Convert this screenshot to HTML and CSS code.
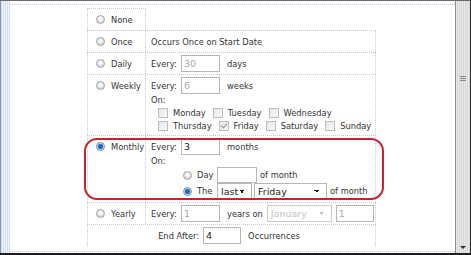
FILE: index.html
```html
<!DOCTYPE html>
<html lang="en">
<head>
    <meta charset="UTF-8">
    <title>Recurrence</title>
    <link rel="stylesheet" href="styles.css">
</head>
<body>
    <div class="window">
        <div class="edge"></div>

        <div class="page">
            <div class="recur">
                <div class="row row-none">
                    <div class="kind"><div class="line"><input type="radio" name="kind"> None</div></div>
                    <div class="detail"></div>
                </div>

                <div class="row">
                    <div class="kind"><div class="line"><input type="radio" name="kind"> Once</div></div>
                    <div class="detail"><div class="line">Occurs Once on Start Date</div></div>
                </div>

                <div class="row">
                    <div class="kind"><div class="line"><input type="radio" name="kind"> Daily</div></div>
                    <div class="detail">
                        <div class="line">
                            <span class="every">Every:</span>
                            <input type="text" class="num" value="30" disabled>
                            <span class="unit">days</span>
                        </div>
                    </div>
                </div>

                <div class="row row-weekly">
                    <div class="kind"><div class="line"><input type="radio" name="kind"> Weekly</div></div>
                    <div class="detail">
                        <div class="line">
                            <span class="every">Every:</span>
                            <input type="text" class="num" value="6" disabled>
                            <span class="unit">weeks</span>
                        </div>
                        <div class="line line-on">On:</div>
                        <div class="days">
                            <label><input type="checkbox"> Monday</label>
                            <label><input type="checkbox"> Tuesday</label>
                            <label><input type="checkbox"> Wednesday</label>
                        </div>
                        <div class="days">
                            <label><input type="checkbox"> Thursday</label>
                            <label><input type="checkbox" checked> Friday</label>
                            <label><input type="checkbox"> Saturday</label>
                            <label><input type="checkbox"> Sunday</label>
                        </div>
                    </div>
                </div>

                <div class="row row-monthly">
                    <div class="kind"><div class="line"><input type="radio" name="kind" checked> Monthly</div></div>
                    <div class="detail">
                        <div class="line">
                            <span class="every">Every:</span>
                            <input type="text" class="num" value="3">
                            <span class="unit">months</span>
                        </div>
                        <div class="line line-on">On:</div>
                        <div class="line line-pick">
                            <input type="radio" name="monthly">
                            <span class="opt">Day</span>
                            <input type="text" class="num day-num" value="">
                            <span class="tail">of month</span>
                        </div>
                        <div class="line line-pick">
                            <input type="radio" name="monthly" checked>
                            <span class="opt">The</span>
                            <select class="pick pick-nth"><option>last</option></select>
                            <select class="pick pick-wd"><option>Friday</option></select>
                            <span class="tail">of month</span>
                        </div>
                    </div>
                    <div class="callout"></div>
                </div>

                <div class="row row-yearly">
                    <div class="kind"><div class="line"><input type="radio" name="kind"> Yearly</div></div>
                    <div class="detail">
                        <div class="line">
                            <span class="every">Every:</span>
                            <input type="text" class="num" value="1" disabled>
                            <span class="unit">years on</span>
                            <select class="pick pick-month" disabled><option>January</option></select>
                            <input type="text" class="num day-of" value="1" disabled>
                        </div>
                    </div>
                </div>

                <div class="row row-end">
                    <div class="line">
                        End After:
                        <input type="text" class="num end-num" value="4">
                        <span class="unit">Occurrences</span>
                    </div>
                </div>
            </div>
        </div>

        <div class="scrollbar">
            <div class="thumb"><span class="grip"></span></div>
            <span class="down"></span>
        </div>
    </div>
</body>
</html>
```

FILE: styles.css
```css
* {
    box-sizing: border-box;
}
body {
    margin: 0;
    background: #fff;
    font-family: "DejaVu Sans", Verdana, sans-serif;
    font-size: 8.3px;
    color: #333;
}
.window {
    display: flex;
    width: 471px;
    height: 255px;
    border-top: 1px solid #6a6a6a;
    border-bottom: 2px solid #1e1e1e;
    border-right: 1px solid #2a2a2a;
}
.edge {
    width: 10px;
    border-left: 1px solid #8a94a8;
    background: repeating-linear-gradient(90deg, #d3def4 0 1px, #f1f4fc 1px 2px);
}
.page {
    flex: 1;
    margin: 3px 0 1px;
    padding: 3px 0 0 77px;
    border-top: 1px dotted #b9c6e4;
    border-bottom: 1px dotted #b9c6e4;
}
.recur {
    width: 289px;
}
.row {
    position: relative;
    display: grid;
    grid-template-columns: 58px 1fr;
    border-top: 1px dotted #c9c9d6;
    border-left: 1px dotted #c9c9d6;
    border-right: 1px dotted #c9c9d6;
}
.row-none {
    border-top: none;
    border-right: none;
}
.row-none .kind {
    border-top: 1px dotted #c9c9d6;
}
.kind {
    padding: 2px 0 2px 8px;
    border-right: 1px dotted #c9c9d6;
}
.kind .line {
    gap: 6px;
}
.detail {
    padding: 2px 0 2px 5px;
}
.row-weekly .detail {
    padding-bottom: 3px;
}
.row-monthly .detail {
    padding-bottom: 3px;
}
.line {
    display: flex;
    align-items: center;
    height: 17px;
    white-space: nowrap;
}
.line-on {
    height: 12px;
}
.line-pick {
    height: 16px;
    padding-left: 32px;
}
.every {
    width: 30px;
}
.unit {
    margin-left: 7px;
}
.num {
    width: 39px;
    height: 17px;
    margin: 0;
    padding: 0 2px;
    border: 1px solid #b7b7b7;
    font-family: "DejaVu Sans", Verdana, sans-serif;
    font-size: 9.5px;
    color: #222;
    background: #fff;
}
.num:disabled {
    color: #a8a8a8;
    background: #fff;
}
.day-num {
    width: 40px;
    height: 16px;
}
.opt {
    width: 20px;
    margin-left: 5px;
}
.tail {
    margin-left: 3px;
}
.pick {
    appearance: none;
    height: 16px;
    margin: 0;
    padding: 0 0 0 3px;
    border: 1px solid #b7b7b7;
    border-radius: 0;
    font-family: "DejaVu Sans", Verdana, sans-serif;
    font-size: 9.5px;
    color: #222;
    background-color: #fff;
    background-image: linear-gradient(45deg, transparent 50%, #1e1e1e 50%), linear-gradient(135deg, #1e1e1e 50%, transparent 50%);
    background-size: 3px 3px, 3px 3px;
    background-position: calc(100% - 9px) 6px, calc(100% - 6px) 6px;
    background-repeat: no-repeat;
}
.pick-nth {
    width: 35px;
}
.pick-wd {
    width: 73px;
    margin-left: 2px;
}
.pick-month {
    width: 65px;
    height: 17px;
    margin-left: 4px;
    color: #a8a8a8;
    background-image: linear-gradient(45deg, transparent 50%, #b0b0b0 50%), linear-gradient(135deg, #b0b0b0 50%, transparent 50%);
}
.day-of {
    width: 38px;
    margin-left: 4px;
}
.row-end {
    display: block;
    padding: 2px 5px 2px 0;
    border-right: 1px dotted #c9c9d6;
}
.row-end .line {
    justify-content: center;
}
.end-num {
    width: 38px;
    margin-left: 4px;
}

input[type="radio"] {
    appearance: none;
    width: 9px;
    height: 9px;
    margin: 0;
    border: 1px solid #a3a3a3;
    border-radius: 50%;
    background: radial-gradient(circle at 50% 40%, #f6f6f6 0 1.5px, #d2d2d2 4px);
    flex: none;
}
input[type="radio"]:checked {
    border-color: #7e8a98;
    background: radial-gradient(circle, #1670b8 0 2px, #5c9bd0 2.6px, #dde6ee 3.2px);
}
.days {
    display: flex;
    align-items: center;
    height: 13px;
    padding-left: 7px;
}
.days label {
    display: flex;
    align-items: center;
    gap: 5px;
    margin-right: 7px;
}
input[type="checkbox"] {
    appearance: none;
    position: relative;
    width: 10px;
    height: 10px;
    margin: 0;
    border: 1px solid #bdbdbd;
    background: linear-gradient(135deg, #e6e6e6, #fafafa);
}
input[type="checkbox"]:checked::after {
    content: "";
    position: absolute;
    left: 2px;
    top: 0;
    width: 3px;
    height: 5px;
    border-right: 1px solid #8a8a8a;
    border-bottom: 1px solid #8a8a8a;
    transform: rotate(40deg);
}

/* red annotation round the monthly row */
.callout {
    position: absolute;
    left: -4px;
    top: 2px;
    width: 300px;
    height: 62px;
    border: 2px solid #c6232e;
    border-radius: 13px;
    pointer-events: none;
}

.scrollbar {
    display: flex;
    flex-direction: column;
    align-items: center;
    width: 15px;
    border-left: 1px solid #8d8d8d;
    background: repeating-linear-gradient(90deg, #e9e9e9 0 1px, #d6d6d6 1px 2px);
}
.thumb {
    display: flex;
    align-items: center;
    justify-content: center;
    width: 12px;
    height: 150px;
    margin-top: 2px;
}
.grip {
    width: 6px;
    height: 5px;
    border-top: 1px solid #8a8a8a;
    border-bottom: 1px solid #8a8a8a;
    background: linear-gradient(#8a8a8a, #8a8a8a) center / 100% 1px no-repeat;
}
.down {
    margin-top: auto;
    margin-bottom: 4px;
    border-left: 3px solid transparent;
    border-right: 3px solid transparent;
    border-top: 3px solid #333;
}
```
